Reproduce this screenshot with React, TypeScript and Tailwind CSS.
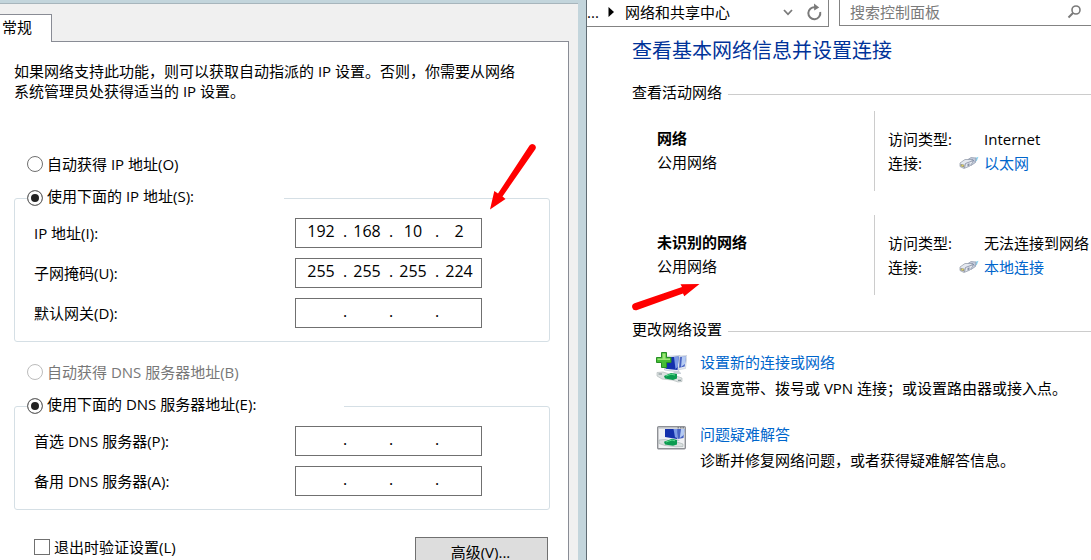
import React from 'react';

interface IpFieldProps {
  id: string;
  label: string;
  octets?: string[];
}

interface NetworkProps {
  name: string;
  access: string;
  connection: string;
}

interface TaskProps {
  icon: React.ReactNode;
  title: string;
  description: string;
}

const radioBase =
  'w-4 h-4 shrink-0 appearance-none rounded-full border border-[#707070] bg-white checked:bg-[#222222] checked:shadow-[inset_0_0_0_3px_white] disabled:border-[#bcbcbc]';

const IpField: React.FC<IpFieldProps> = ({ id, label, octets = ['', '', '', ''] }) => (
  <div className="flex items-center pl-[7px]">
    <label htmlFor={id} className="w-[261px] shrink-0">{label}</label>
    <div className="flex h-[30px] w-[187px] items-center border border-[#707070] bg-white pb-1 pl-[5px] text-base leading-5">
      {octets.map((octet, i) => (
        <React.Fragment key={i}>
          {i > 0 && <span className="w-1 text-center">.</span>}
          <input
            id={i === 0 ? id : undefined}
            aria-label={i === 0 ? undefined : `${label} ${i + 1}`}
            type="text"
            maxLength={3}
            defaultValue={octet}
            className="h-5 w-[42px] shrink-0 bg-transparent pr-0.5 text-center outline-none"
          />
        </React.Fragment>
      ))}
    </div>
  </div>
);

const Plug = () => (
  <svg width="20" height="14" viewBox="0 0 20 14" aria-hidden="true">
    <path d="M13 3 L19.5 0.8 L18 4.5 L15 7Z" fill="#8fd3ef" />
    <path d="M9 3.5 L12 1.5 L17 2 L16.5 6.5 L12 9.5Z" fill="#c3cbdb" stroke="#8d97ab" strokeWidth="0.7" />
    <path d="M1 7 L6 3.5 L13 3.5 L13.5 6.5 L11 10 L5 12.5 L1 10.5Z" fill="#e4e8ef" stroke="#8b93a3" strokeWidth="0.7" />
    <path d="M6.5 7.5 L13 5 M6.5 7.5 L5.5 12" fill="none" stroke="#8089a0" strokeWidth="0.8" />
    <path d="M8.5 8 L10.5 7.2 V9.5 L8.5 10.5Z" fill="#8791a8" />
    <path d="M13.5 3.5 L15 5.5" stroke="#6f7c99" strokeWidth="1" />
    <path d="M1.5 8 L5.5 8.8 L5 11.5 L1.5 10.2Z" fill="#8b8c84" />
    <path d="M2.5 8.8h2v1.6h-2z" fill="#e6d558" />
  </svg>
);

const NewConnectionIcon = () => (
  <svg width="31" height="32" viewBox="0 0 31 32" aria-hidden="true">
    {/* back monitor */}
    <path d="M22 4 L31 3.5 L29.5 16.5 L21 18Z" fill="#e6eaf2" stroke="#b2bccb" strokeWidth="0.5" />
    <path d="M23 5 L30 4.5 L28.7 14.5 L22.3 16Z" fill="#4661c2" />
    <path d="M26 4.8 L30 4.5 L29 12 L25 15Z" fill="#b5cbf3" />
    {/* front monitor */}
    <path d="M9 4.5 L24 3.5 L22.5 20 L8.5 18Z" fill="#eceff4" stroke="#a3aec0" strokeWidth="0.5" />
    <path d="M10 5.5 L22.8 4.5 L21.5 18 L9.5 16.8Z" fill="#1430ac" />
    <path d="M18 5 L22.8 4.5 L21.8 15 L19.5 17Z" fill="#7d9be6" />
    <path d="M18 19h5l2 2v1h-8z" fill="#cbd2da" />
    {/* cable */}
    <path d="M1 20.5 L7 20 L20 24 L26 26 L26 29.5 L22 30 L16 28 L6 27 L1 24Z" fill="#dde2e2" stroke="#acb5b5" strokeWidth="0.6" />
    <path d="M8 24 L15 21 L21 22 L21 26.5 L17 28 L9 26.5Z" fill="#0b9b50" />
    <path d="M10 24 L15 22.2 L19 23" fill="none" stroke="#5bdb8b" />
    <path d="M2.5 22h3.5M22 28.3h3" stroke="#75868a" />
    <path d="M5.5 0.5h5v5h4.5v5h-4.5v5h-5v-5H0.5v-5h5z" fill="#45bd35" stroke="#278e25" />
    <path d="M6.5 1.5h3v5H14v1.5H1.5V6.5h5z" fill="#9be678" />
  </svg>
);

const TroubleshootIcon = () => (
  <svg width="31" height="26" viewBox="0 0 31 26" aria-hidden="true">
    <rect x="1.7" y="2.7" width="27.6" height="22" rx="1" fill="#f1f2f4" stroke="#8e9095" strokeWidth="1.4" />
    <path d="M2.4 3.4h26.2v1.2H2.4z" fill="#bfc1c6" />
    <path d="M21.5 3.8h1.5M24 3.8h1.5M26.5 3.8h1.5" stroke="#63666c" />
    <path d="M21 5h7.5l-1 9-6 1z" fill="#4661c2" />
    <path d="M25 5h3.5l-.7 6-4 3z" fill="#b5cbf3" />
    <path d="M9 5h12.5L21 15 9 13Z" fill="#1430ac" />
    <path d="M17.5 5h4L21 14l-2-.8z" fill="#7d9be6" />
    <path d="M17 15.5h5l2 1.5h-8z" fill="#c0c9d3" />
    <path d="M3 16 L9 15.5 L21 18 L27 20 L27 22.5 L20 22.8 L9 21.5 L3 19.5Z" fill="#d9dfdf" stroke="#a5afaf" strokeWidth="0.6" />
    <path d="M8 17.8 L16 14.8 L21 16 L21 20.5 L17 21.8 L9 20.5Z" fill="#0b9b50" />
    <path d="M10 18 L16 16 L19 16.8" fill="none" stroke="#5bdb8b" />
  </svg>
);

const SectionTitle: React.FC<{ children: string }> = ({ children }) => (
  <div className="flex items-center gap-1.5">
    <h2 className="shrink-0">{children}</h2>
    <span className="mt-1 h-px flex-1 bg-[#cccccc]" />
  </div>
);

const Network: React.FC<NetworkProps> = ({ name, access, connection }) => (
  <div className="flex h-20 pl-[25px]">
    <div className="flex w-[217px] shrink-0 flex-col gap-1 pt-[17px]">
      <strong className="font-bold">{name}</strong>
      <span>公用网络</span>
    </div>
    <dl className="flex flex-1 flex-col gap-1 whitespace-nowrap border-l border-[#cccccc] pl-[13px] pt-[18px]">
      <div className="flex">
        <dt className="w-24 shrink-0">访问类型:</dt>
        <dd>{access}</dd>
      </div>
      <div className="flex items-center">
        <dt className="w-[71px] shrink-0">连接:</dt>
        <dd className="flex items-center gap-[5px]">
          <Plug />
          <a href="#" className="text-[#0066cc]">{connection}</a>
        </dd>
      </div>
    </dl>
  </div>
);

const Task: React.FC<TaskProps> = ({ icon, title, description }) => (
  <li className="flex gap-[13px]">
    <div className="w-[31px] shrink-0">{icon}</div>
    <div className="flex flex-col gap-1.5 whitespace-nowrap">
      <a href="#" className="text-[#0066cc]">{title}</a>
      <p>{description}</p>
    </div>
  </li>
);

const IpSettings = () => (
  <section className="min-w-0 border-r border-[#5f6b73] bg-[#c3d5dc] pr-2 pt-[3px]">
    <div className="flex h-full flex-col border-t border-[#a7b5bc] bg-[#f0f0f0] pr-[9px] pt-2.5">
      <div role="tablist" className="relative z-10 -mb-px flex">
        <button
          role="tab"
          aria-selected="true"
          className="h-7 w-[52px] border-r border-t border-[#898c95] bg-white pb-1 pl-0.5 text-left"
        >
          常规
        </button>
      </div>

      <form className="flex-1 border-r border-t border-[#898c95] bg-white pl-3.5 pr-[18px] pt-[19px]">
        <p className="pr-6">
          如果网络支持此功能，则可以获取自动指派的 IP 设置。否则，你需要从网络系统管理员处获得适当的 IP 设置。
        </p>

        {/* IP address */}
        <label className="mt-[53px] flex items-center gap-1 pl-[13px]">
          <input type="radio" name="ip" className={radioBase} />
          自动获得 IP 地址(O)
        </label>
        <fieldset className="mt-3 rounded-[3px] border border-[#d5dfe5] px-3 pb-[13px] pt-2">
          <legend className="w-[257px]">
            <label className="flex items-center gap-1">
              <input type="radio" name="ip" defaultChecked className={radioBase} />
              <span className="pb-1">使用下面的 IP 地址(S):</span>
            </label>
          </legend>
          <div className="flex flex-col gap-2.5">
            <IpField id="address" label="IP 地址(I):" octets={['192', '168', '10', '2']} />
            <IpField id="mask" label="子网掩码(U):" octets={['255', '255', '255', '224']} />
            <IpField id="gateway" label="默认网关(D):" />
          </div>
        </fieldset>

        {/* DNS */}
        <label className="mt-5 flex items-center gap-1 pl-[13px] text-[#787878]">
          <input type="radio" name="dns" disabled className={radioBase} />
          自动获得 DNS 服务器地址(B)
        </label>
        <fieldset className="mt-3 rounded-[3px] border border-[#d5dfe5] px-3 pb-[13px] pt-2">
          <legend className="w-[317px]">
            <label className="flex items-center gap-1">
              <input type="radio" name="dns" defaultChecked className={radioBase} />
              <span className="pb-1">使用下面的 DNS 服务器地址(E):</span>
            </label>
          </legend>
          <div className="flex flex-col gap-2.5">
            <IpField id="dns-primary" label="首选 DNS 服务器(P):" />
            <IpField id="dns-secondary" label="备用 DNS 服务器(A):" />
          </div>
        </fieldset>

        <div className="mt-[27px] flex items-start justify-between pl-5 pr-0.5">
          <label className="flex items-center gap-1">
            <input type="checkbox" className="h-4 w-4 appearance-none border border-[#707070] bg-white checked:bg-[#222222]" />
            退出时验证设置(L)
          </label>
          <button type="button" className="h-[34px] w-[133px] border border-[#707070] bg-[#dddddd] pb-1 pr-0.5">
            高级(V)...
          </button>
        </div>
      </form>
    </div>
  </section>
);

const SharingCenter = () => (
  <section className="min-w-0 overflow-hidden">
    {/* Address bar and search */}
    <div className="flex h-[27px] gap-2.5">
      <div className="flex w-[242px] items-center border-b border-r border-[#838383] pb-0.5 pr-1.5">
        <span className="w-[21px]">...</span>
        <svg width="6" height="10" viewBox="0 0 6 10" aria-hidden="true">
          <path d="M0.5 0 L6 5 L0.5 10Z" fill="#000" />
        </svg>
        <span className="ml-[11px] flex-1">网络和共享中心</span>
        <button type="button" aria-label="展开" className="mr-3.5">
          <svg width="10" height="7" viewBox="0 0 10 7">
            <path d="M1 1 L5 5.3 L9 1" fill="none" stroke="#7a7a7a" strokeWidth="1.8" />
          </svg>
        </button>
        <button type="button" aria-label="刷新">
          <svg width="15" height="18" viewBox="0 0 15 18">
            <path d="M8 4.2 A6 6 0 1 0 13.2 9" fill="none" stroke="#7a7a7a" strokeWidth="2" />
            <path d="M7 0.5 L12.2 4.5 L7.2 7.5Z" fill="#7a7a7a" />
          </svg>
        </button>
      </div>
      <div className="flex h-[26px] min-w-0 flex-1 items-center border-b border-l border-[#838383] pb-0.5 pl-2.5 pr-[9px]">
        <input
          type="search"
          aria-label="搜索控制面板"
          placeholder="搜索控制面板"
          className="min-w-0 flex-1 bg-transparent outline-none placeholder:text-[#7a7a7a]"
        />
        <svg width="15" height="14" viewBox="0 0 15 14" aria-hidden="true">
          <circle cx="9" cy="5" r="4" fill="none" stroke="#7a7a7a" strokeWidth="1.6" />
          <path d="M6 8 L1.5 12.5" stroke="#7a7a7a" strokeWidth="2" />
        </svg>
      </div>
    </div>

    <div className="pl-[45px]">
      <h1 className="mt-[9px] text-xl leading-[30px] text-[#003399]">查看基本网络信息并设置连接</h1>

      <div className="mt-4 flex flex-col">
        <SectionTitle>查看活动网络</SectionTitle>
        <div className="mt-[9px] flex flex-col gap-6">
          <Network name="网络" access="Internet" connection="以太网" />
          <Network name="未识别的网络" access="无法连接到网络" connection="本地连接" />
        </div>
      </div>

      <div className="mt-6">
        <SectionTitle>更改网络设置</SectionTitle>
        <ul className="mt-[13px] flex flex-col gap-[26px] pl-6">
          <Task
            icon={<NewConnectionIcon />}
            title="设置新的连接或网络"
            description="设置宽带、拨号或 VPN 连接；或设置路由器或接入点。"
          />
          <Task
            icon={<TroubleshootIcon />}
            title="问题疑难解答"
            description="诊断并修复网络问题，或者获得疑难解答信息。"
          />
        </ul>
      </div>
    </div>
  </section>
);

export default function App() {
  return (
    <main className="relative grid h-screen grid-cols-[587fr_504fr] overflow-hidden bg-white font-['Open_Sans','Noto_Sans_CJK_SC',sans-serif] text-[15px] leading-5 text-black">
      <IpSettings />
      <SharingCenter />

      {/* Red marker arrows */}
      <svg className="pointer-events-none absolute left-[489px] top-[142px] z-20" width="50" height="70" viewBox="0 0 50 70" aria-hidden="true">
        <path d="M1 67.5 L5.3 49 L9 51.5 L40.5 3.5 A3.5 3.5 0 0 1 46.5 7 L13.5 54.5 L16.5 57Z" fill="#ff0000" />
      </svg>
      <svg className="pointer-events-none absolute left-[630px] top-[282px] z-20" width="72" height="30" viewBox="0 0 72 30" aria-hidden="true">
        <path d="M69.5 2 L50.5 2.3 L52 5 L4.5 21.3 A3.6 3.6 0 0 0 6.5 28.2 L53 11.5 L54.3 14.2Z" fill="#ff0000" />
      </svg>
    </main>
  );
}
